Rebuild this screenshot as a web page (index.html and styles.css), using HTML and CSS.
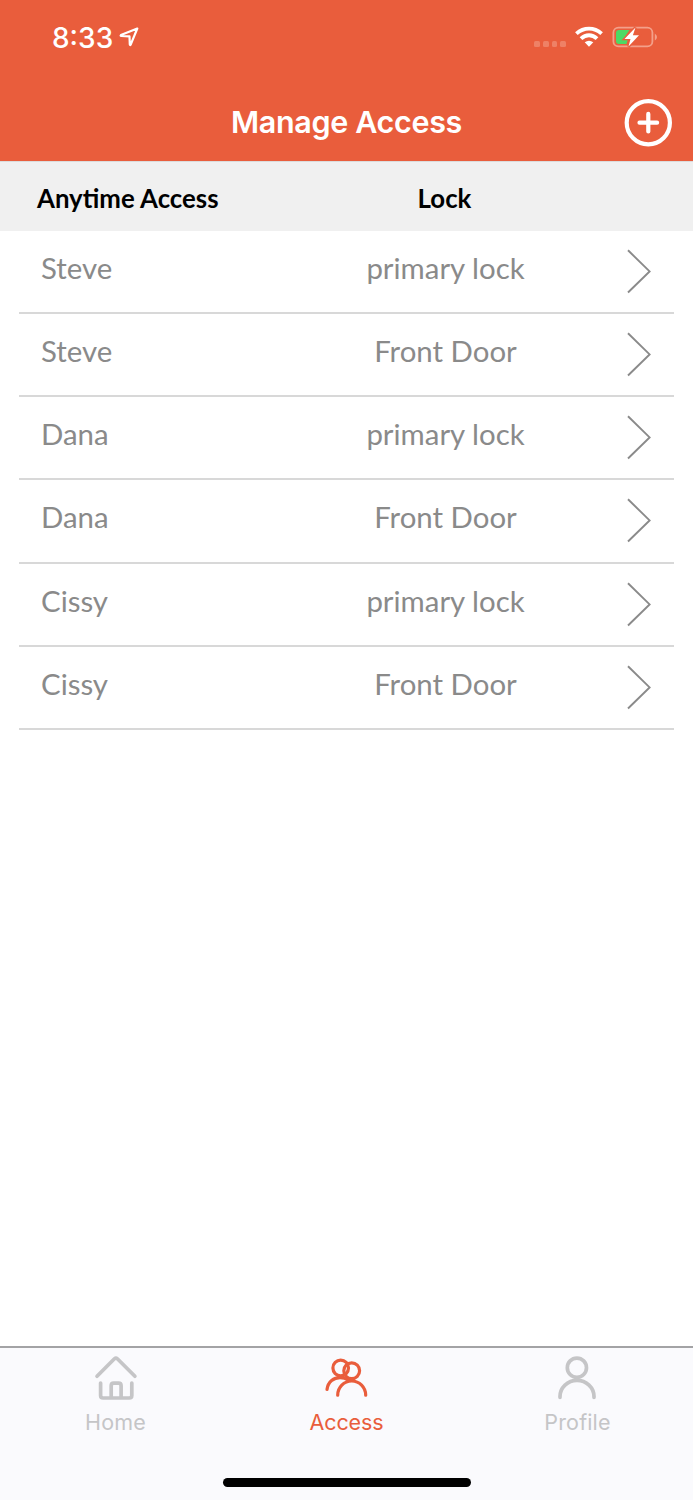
FILE: index.html
```html
<!DOCTYPE html>
<html lang="en">
<head>
    <meta charset="UTF-8">
    <meta name="viewport" content="width=device-width, initial-scale=1.0">
    <title>Manage Access</title>
    <link rel="stylesheet" href="styles.css">
</head>
<body>
<svg class="sprite" width="0" height="0">
    <symbol id="chevron" viewBox="0 0 26 46">
        <path d="M2 1.3L23.6 22.4L2 43.5" fill="none" stroke="currentColor" stroke-width="1.9"/>
    </symbol>
</svg>
<header class="header">
    <div class="status-bar">
        <div class="status-left">
            <span class="time">8:33</span>
            <svg class="location" width="20" height="20" viewBox="0 0 20 20">
                <path d="M18.3 1.5L1.9 8.1Q1.2 9 2.2 9L10.5 9.3L10.8 17.3Q11 18.6 11.7 17.6Z" fill="none" stroke="#fff" stroke-width="2.2" stroke-linejoin="round"/>
            </svg>
        </div>
        <div class="status-right">
            <div class="signal"><i></i><i></i><i></i><i></i></div>
            <svg class="wifi" width="28" height="21" viewBox="0 0 28 21">
                <g fill="none" stroke="#fff" stroke-width="3.9">
                    <path d="M1.4 7.6Q7 2.6 14 2.6T26.6 7.6"/>
                    <path d="M6 12.6Q9.6 9.2 14 9.2T22 12.6"/>
                </g>
                <path d="M9.7 16.3Q14 13.1 18.3 16.3L14 20.8Z" fill="#fff"/>
            </svg>
            <svg class="battery" width="46" height="22" viewBox="0 0 46 22">
                <rect x="1.4" y="1.6" width="39" height="18.8" rx="5" fill="none" stroke="#f3a08a" stroke-width="1.8"/>
                <path d="M42.8 7.5Q45 9 45 11T42.8 14.5Z" fill="#f3a08a"/>
                <path d="M7 4H17.5L11.6 12.8H16L14.5 18H7Q4 18 4 15V7Q4 4 7 4Z" fill="#4cd964"/>
                <path d="M23.5 1.5L12.5 13H18.5L16.5 20.5L27 9.2H20.9Z" fill="#fff" stroke="#e95d3c" stroke-width="2.6" paint-order="stroke"/>
            </svg>
        </div>
    </div>
    <div class="nav-bar">
        <h1 class="title">Manage Access</h1>
        <svg class="add" width="48" height="48" viewBox="0 0 48 48">
            <circle cx="24.3" cy="23.7" r="21.6" fill="none" stroke="#fff" stroke-width="4.2"/>
            <path d="M15.5 23.7H33.1M24.3 14.9V32.5" stroke="#fff" stroke-width="4.2" stroke-linecap="round"/>
        </svg>
    </div>
</header>
<main class="content">
    <div class="list-head">
        <span class="name">Anytime Access</span>
        <span class="lock">Lock</span>
    </div>
    <ul class="list">
        <li class="row"><span class="name">Steve</span><span class="lock">primary lock</span><svg class="chevron"><use href="#chevron"/></svg></li>
        <li class="row"><span class="name">Steve</span><span class="lock">Front Door</span><svg class="chevron"><use href="#chevron"/></svg></li>
        <li class="row"><span class="name">Dana</span><span class="lock">primary lock</span><svg class="chevron"><use href="#chevron"/></svg></li>
        <li class="row"><span class="name">Dana</span><span class="lock">Front Door</span><svg class="chevron"><use href="#chevron"/></svg></li>
        <li class="row"><span class="name">Cissy</span><span class="lock">primary lock</span><svg class="chevron"><use href="#chevron"/></svg></li>
        <li class="row"><span class="name">Cissy</span><span class="lock">Front Door</span><svg class="chevron"><use href="#chevron"/></svg></li>
    </ul>
</main>
<footer class="footer">
    <nav class="tabs">
        <div class="tab">
            <svg width="48" height="48" viewBox="0 0 48 48">
                <path d="M5 26.3L22.4 8.8Q23.9 7.5 25.4 8.8L42.9 26.3"/>
                <path d="M8.6 33V45.5Q8.6 48 11.1 48H37.3Q39.8 48 39.8 45.5V33M19.2 47.5V35.7Q19.2 33.2 21.7 33.2H26.6Q29.1 33.2 29.1 35.7V47.5"/>
            </svg>
            <span>Home</span>
        </div>
        <div class="tab active">
            <svg width="48" height="48" viewBox="0 0 48 48">
                <circle cx="17.7" cy="18" r="7.8"/>
                <circle cx="28.7" cy="20.7" r="7.9"/>
                <path d="M4 39.5C5 31.5 11 27.6 17 27.6C20.5 27.6 23 28.5 25.5 30.2"/>
                <path d="M14.7 45.2A14 14.2 0 0 1 42.7 45.2"/>
            </svg>
            <span>Access</span>
        </div>
        <div class="tab">
            <svg width="48" height="48" viewBox="0 0 48 48">
                <circle cx="22.9" cy="17.7" r="9.6"/>
                <path d="M6 47.3V46.5A17 16.2 0 0 1 40 46.5V47.3"/>
            </svg>
            <span>Profile</span>
        </div>
    </nav>
    <div class="home-indicator"></div>
</footer>
</body>
</html>
```
FILE: styles.css
```css
* {
    margin: 0;
    padding: 0;
    box-sizing: border-box;
}

body {
    display: flex;
    flex-direction: column;
    width: 693px;
    height: 1500px;
    background: #fff;
    font-family: Lato, "Open Sans", sans-serif;
    overflow: hidden;
}

.sprite {
    position: absolute;
}

.header {
    height: 161px;
    background: #e95d3c;
    color: #fff;
    font-family: Inter, "Liberation Sans", sans-serif;
}

.status-bar {
    display: flex;
    justify-content: space-between;
    height: 75px;
    padding: 0 35px 0 52px;
}

.status-left {
    display: flex;
    padding-top: 20px;
}

.time {
    width: 67px;
    font-size: 28px;
    font-weight: 500;
    line-height: 36px;
}

.location {
    margin-top: 7px;
}

.status-right {
    display: flex;
    padding-top: 26px;
}

.signal {
    display: flex;
    gap: 3px;
    padding: 15px 9px 0 0;
}

.signal i {
    width: 5.7px;
    height: 5.7px;
    border-radius: 1.5px;
    background: #ee8166;
}

.battery {
    margin-left: 9px;
}

.nav-bar {
    display: grid;
    grid-template-columns: 1fr auto 1fr;
    align-items: center;
    height: 86px;
    padding: 9px 21px 0 0;
}

.title {
    grid-column: 2;
    margin: -2px 0 0 21px;
    font-size: 30.5px;
    font-weight: 600;
    line-height: 40px;
    letter-spacing: -0.35px;
}

.add {
    justify-self: end;
}

.content {
    flex: 1;
}

.list-head {
    display: flex;
    height: 70px;
    padding: 0 37px;
    border-top: 1px solid #dcdcdc;
    background: #f0f0f0;
    color: #000;
    font-size: 25.8px;
    font-weight: 700;
    line-height: 72px;
}

.list-head .name {
    width: 302px;
}

.lock {
    width: 211px;
    text-align: center;
}

.list {
    list-style: none;
    padding: 0 19px;
}

.row {
    display: flex;
    height: 83.15px;
    padding-left: 22px;
    border-bottom: 2px solid #d8d8d8;
    color: #8a8a8a;
    font-size: 29.4px;
    line-height: 74px;
}

.row .name {
    width: 299px;
}

.chevron {
    width: 26px;
    height: 46px;
    margin: 18px 0 0 75px;
}

.footer {
    display: flex;
    flex-direction: column;
    align-items: center;
    height: 154px;
    border-top: 2px solid #a3a3a5;
    background: #fafafd;
}

.tabs {
    display: flex;
    width: 100%;
    height: 130px;
    font-family: Inter, "Liberation Sans", sans-serif;
    font-size: 21.5px;
    line-height: 28px;
}

.tab {
    flex: 1;
    display: flex;
    flex-direction: column;
    align-items: center;
    color: #c5c5c7;
    letter-spacing: 0.15px;
}

.tab.active {
    color: #e95d3c;
    letter-spacing: -0.1px;
}

.tab svg {
    margin: 2px 0 10px;
    fill: none;
    stroke: currentColor;
    stroke-width: 3.7;
    stroke-linecap: round;
    overflow: visible;
}

.tab.active svg {
    stroke-width: 3.2;
}

.home-indicator {
    width: 248px;
    height: 9px;
    border-radius: 5px;
    background: #000;
}
```
